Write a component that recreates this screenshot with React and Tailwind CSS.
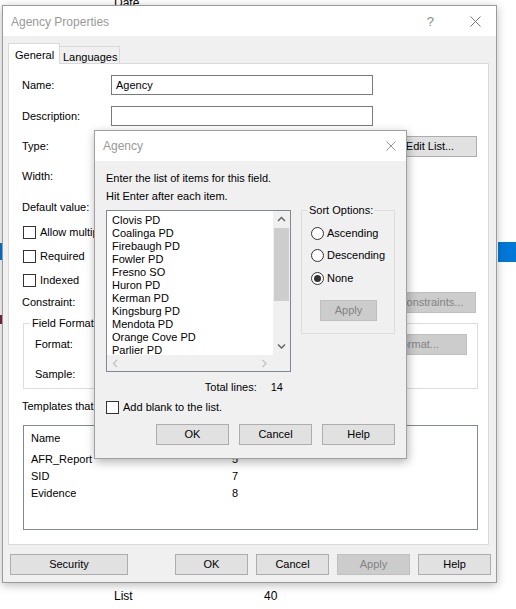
import React from "react";

const agencies = [
  "Clovis PD",
  "Coalinga PD",
  "Firebaugh PD",
  "Fowler PD",
  "Fresno SO",
  "Huron PD",
  "Kerman PD",
  "Kingsburg PD",
  "Mendota PD",
  "Orange Cove PD",
  "Parlier PD",
  "Reedley PD",
  "Sanger PD",
  "Selma PD",
];

const templates = [
  ["AFR_Report", 5],
  ["SID", 7],
  ["Evidence", 8],
];

// plain win32 style push button
const Btn = ({ children, disabled, className = "" }) => (
  <button
    className={`h-[21px] border text-[11px] leading-none ${
      disabled
        ? "bg-[#cccccc] border-[#bfbfbf] text-[#838383]"
        : "bg-[#e1e1e1] border-[#adadad] text-black"
    } ${className}`}
  >
    {children}
  </button>
);

const Check = ({ label, className = "" }) => (
  <div className={`flex items-center h-[16px] ${className}`}>
    <span className="w-[13px] h-[13px] border border-[#333333] bg-white shrink-0" />
    <span className="ml-[4px] whitespace-nowrap">{label}</span>
  </div>
);

const Radio = ({ label, checked, className = "" }) => (
  <div className={`flex items-center h-[16px] ${className}`}>
    <span className="w-[13px] h-[13px] rounded-full border border-[#333333] bg-white flex items-center justify-center shrink-0">
      {checked && <span className="w-[7px] h-[7px] rounded-full bg-[#333333]" />}
    </span>
    <span className="ml-[3px]">{label}</span>
  </div>
);

const CloseX = ({ size = 11, color = "#777777" }) => (
  <svg width={size} height={size} viewBox="0 0 11 11">
    <path d="M0.5 0.5 L10.5 10.5 M10.5 0.5 L0.5 10.5" stroke={color} strokeWidth="1" fill="none" />
  </svg>
);

const Chevron = ({ dir, color }) => {
  const d = {
    up: "M1 5 L4.5 1.5 L8 5",
    down: "M1 1.5 L4.5 5 L8 1.5",
    left: "M5 1 L1.5 4.5 L5 8",
    right: "M1.5 1 L5 4.5 L1.5 8",
  }[dir];
  const vertical = dir === "up" || dir === "down";
  return (
    <svg width={vertical ? 9 : 7} height={vertical ? 7 : 9} viewBox={vertical ? "0 0 9 7" : "0 0 7 9"}>
      <path d={d} stroke={color} strokeWidth="1.4" fill="none" />
    </svg>
  );
};

const Field = ({ label, children, className = "" }) => (
  <div className={`flex items-center ${className}`}>
    <span className="w-[89px] shrink-0 whitespace-nowrap">{label}</span>
    {children}
  </div>
);

function MainWindow() {
  return (
    <div className="absolute left-[2px] top-[5px] w-[495px] h-[578px] border border-[#9b9b9b] bg-[#f0f0f0] shadow-[0_2px_9px_rgba(0,0,0,0.28)] flex flex-col">
      {/* title bar */}
      <div className="h-[30px] bg-white flex items-center pl-[8px] pr-[15px] pt-px text-[12px] text-[#999999]">
        <span>Agency Properties</span>
        <span className="ml-auto mr-[36px] text-[13px] text-[#8a8a8a]">?</span>
        <CloseX />
      </div>

      <div className="flex flex-col pt-[7px]">
        {/* tabs */}
        <div className="relative z-10 flex items-end h-[20px] ml-[5px]">
          <div className="h-[21px] -mb-px w-[52px] bg-white border border-b-0 border-[#d9d9d9] pl-[6px] pt-[3px]">
            General
          </div>
          <div className="h-[17px] w-[60px] border border-l-0 border-b-0 border-[#d9d9d9] pl-[3px] pt-[2px]">
            Languages
          </div>
        </div>

        {/* tab page */}
        <div className="ml-[5px] mr-[7px] h-[482px] border border-[#d9d9d9] bg-white pl-[13px] pr-[11px] flex flex-col">
          <Field label="Name:" className="h-[20px] mt-[11px]">
            <div className="w-[262px] h-[20px] border border-[#7a7a7a] pl-[4px] flex items-center">Agency</div>
          </Field>
          <Field label="Description:" className="h-[20px] mt-[11px]">
            <div className="w-[262px] h-[20px] border border-[#7a7a7a]" />
          </Field>
          <Field label="Type:" className="h-[21px] mt-[10px]">
            <div className="w-[180px] h-[21px] border border-[#adadad] bg-[#e5e5e5]" />
            <Btn className="ml-auto w-[94px]">Edit List...</Btn>
          </Field>
          <Field label="Width:" className="h-[20px] mt-[9px]">
            <div className="w-[60px] h-[20px] border border-[#7a7a7a]" />
          </Field>
          <Field label="Default value:" className="h-[20px] mt-[11px]">
            <div className="w-[262px] h-[20px] border border-[#7a7a7a]" />
          </Field>
          <Check label="Allow multiple values" className="mt-[7px] ml-px" />
          <Check label="Required" className="mt-[8px] ml-px" />
          <Check label="Indexed" className="mt-[8px] ml-px" />
          <Field label="Constraint:" className="h-[21px] mt-[4px]">
            <div className="w-[180px] h-[20px] border border-[#7a7a7a]" />
            <Btn disabled className="ml-auto mr-px w-[90px]">Constraints...</Btn>
          </Field>

          <fieldset className="mt-[3px] ml-px w-[455px] h-[73px] border border-[#dcdcdc] pl-[11px] pr-[10px]">
            <legend className="-ml-[5px] px-[2px] leading-[14px]">Field Format</legend>
            <div className="flex items-center h-[21px] mt-[4px]">
              <span>Format:</span>
              <Btn disabled className="ml-auto w-[100px]">Format...</Btn>
            </div>
            <div className="flex items-center h-[16px] mt-[11px]">Sample:</div>
          </fieldset>

          <div className="h-[16px] mt-[9px] flex items-center whitespace-nowrap">Templates that use this field:</div>

          <div className="mt-[11px] ml-px w-[455px] h-[105px] border border-[#828790] pl-[7px] pt-[4px]">
            <div className="flex h-[16px] items-center">
              <span className="w-[201px]">Name</span>
              <span>Position</span>
            </div>
            <div className="mt-[5px]">
              {templates.map(([name, pos]) => (
                <div key={name} className="flex h-[17px] items-center">
                  <span className="w-[201px]">{name}</span>
                  <span>{pos}</span>
                </div>
              ))}
            </div>
          </div>
        </div>

        {/* dialog buttons */}
        <div className="flex mt-[9px] pl-[7px] pr-[5px] gap-[8px]">
          <Btn className="w-[118px]">Security</Btn>
          <Btn className="ml-auto w-[73px]">OK</Btn>
          <Btn className="w-[73px]">Cancel</Btn>
          <Btn disabled className="w-[73px]">Apply</Btn>
          <Btn className="w-[73px]">Help</Btn>
        </div>
      </div>
    </div>
  );
}

function ListEditor() {
  return (
    <div className="absolute left-[94px] top-[130px] w-[313px] h-[329px] border border-[#a0a0a0] bg-[#f0f0f0] shadow-[1px_3px_9px_rgba(0,0,0,0.3)] flex flex-col">
      <div className="h-[30px] bg-white flex items-center pl-[8px] pr-[10px] text-[12px] text-[#999999]">
        <span>Agency</span>
        <span className="ml-auto">
          <CloseX size={10} color="#8c8c8c" />
        </span>
      </div>

      <div className="flex flex-col px-[11px] pt-[9px]">
        <div className="leading-[16px]">Enter the list of items for this field.</div>
        <div className="leading-[16px] mt-[2px]">Hit Enter after each item.</div>

        <div className="flex items-start gap-[10px] mt-[6px]">
          <div className="w-[185px] flex flex-col">
            {/* multi-line list box */}
            <div className="h-[162px] border border-[#828790] flex flex-col">
              <div className="flex h-[144px]">
                <div className="w-[166px] bg-white overflow-hidden pl-[5px] pt-[3px] leading-[13px]">
                  {agencies.map((a) => (
                    <div key={a} className="whitespace-nowrap">{a}</div>
                  ))}
                </div>
                <div className="w-[17px] bg-[#f0f0f0] flex flex-col">
                  <div className="h-[17px] flex items-center justify-center">
                    <Chevron dir="up" color="#606060" />
                  </div>
                  <div className="flex-1">
                    <div className="h-[73px] mx-px bg-[#cdcdcd]" />
                  </div>
                  <div className="h-[17px] flex items-center justify-center">
                    <Chevron dir="down" color="#606060" />
                  </div>
                </div>
              </div>
              <div className="flex h-[16px] bg-[#f0f0f0]">
                <div className="w-[166px] flex items-center justify-between">
                  <span className="w-[17px] flex justify-center">
                    <Chevron dir="left" color="#c4c4c4" />
                  </span>
                  <span className="w-[17px] flex justify-center">
                    <Chevron dir="right" color="#c4c4c4" />
                  </span>
                </div>
                <div className="w-[17px]" />
              </div>
            </div>
            <div className="h-[16px] mt-[7px] flex items-center justify-end gap-[14px] pr-[8px]">
              <span>Total lines:</span>
              <span>14</span>
            </div>
          </div>

          <fieldset className="-mt-[7px] w-[95px] h-[131px] border border-[#dcdcdc] pl-[9px]">
            <legend className="-ml-[4px] px-[2px] leading-[14px]">Sort Options:</legend>
            <Radio label="Ascending" className="mt-[8px]" />
            <Radio label="Descending" className="mt-[6px]" />
            <Radio label="None" checked className="mt-[7px]" />
            <Btn disabled className="mt-[14px] ml-[9px] w-[57px]">Apply</Btn>
          </fieldset>
        </div>

        <Check label="Add blank to the list." className="mt-[4px]" />

        <div className="flex justify-end gap-[10px] mt-[9px]">
          <Btn className="w-[73px]">OK</Btn>
          <Btn className="w-[73px]">Cancel</Btn>
          <Btn className="w-[73px]">Help</Btn>
        </div>
      </div>
    </div>
  );
}

export default function App() {
  return (
    <div className="relative w-[516px] h-[609px] overflow-hidden bg-white text-black text-[11px] font-['Liberation_Sans',Arial,sans-serif]">
      {/* what lies behind on the desktop */}
      <span className="absolute left-[114px] top-[-6px] text-[12px]">Date</span>
      <span className="absolute left-[0px] top-[243px] w-[2px] h-[17px] bg-[#0078d7]" />
      <span className="absolute left-[0px] top-[315px] w-[2px] h-[9px] bg-[#7a2545]" />
      <span className="absolute left-[498px] top-[242px] w-[18px] h-[20px] bg-[#0078d7]" />
      <span className="absolute left-[114px] top-[587px] text-[12px]">List</span>
      <span className="absolute left-[264px] top-[587px] text-[12px]">40</span>

      <MainWindow />
      <ListEditor />
    </div>
  );
}
